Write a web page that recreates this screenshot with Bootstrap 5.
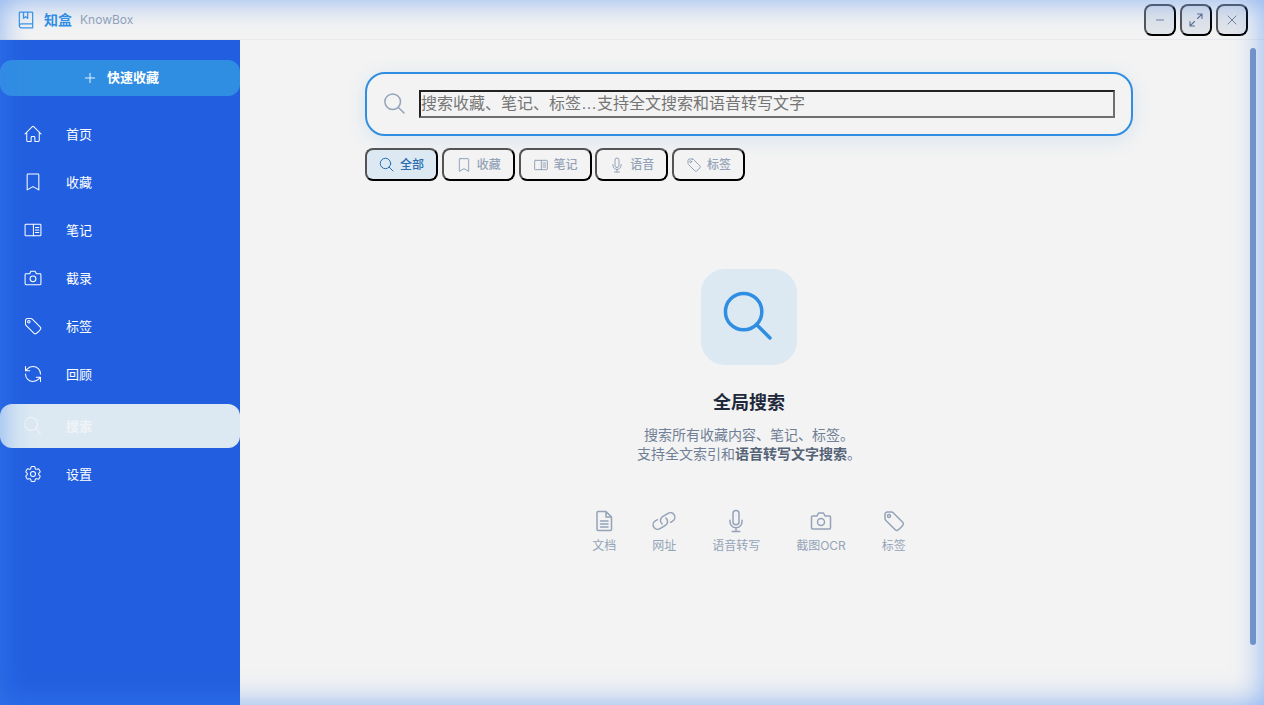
<!DOCTYPE html>
<html lang="zh-CN">
<head>
  <meta charset="UTF-8" />
  <title>知盒 KnowBox</title>
  <link href="https://cdn.jsdelivr.net/npm/bootstrap@5.3.3/dist/css/bootstrap.min.css" rel="stylesheet" />
  <style>
    html, body { height: 100%; overflow: hidden; }
    body { font-family: Inter, "Noto Sans CJK SC", sans-serif; background: #f3f3f3; color: #1a2233; }
    svg.ic { fill: none; stroke: currentColor; stroke-width: 1.5; stroke-linecap: round; stroke-linejoin: round; flex-shrink: 0; overflow: visible; }

    .titlebar { height: 40px; padding: 0 16px; border-bottom: 1px solid #e8e9ec; }
    .logo { color: #3b95e6; margin-right: 8px; }
    .brand { font-size: 14px; font-weight: 600; color: #2f8fe5; margin-right: 8px; }
    .brand-en { font-size: 12px; color: #94a3b8; }
    .win-btn { width: 32px; height: 32px; padding: 0; border: 2px outset #000; border-radius: 8px; background: #e2e5ea; color: #5f7190; }

    .sidebar { width: 240px; background: #225fe0; padding-top: 20px; }
    .quick-btn { height: 36px; padding-left: 2px; gap: 10px; border-radius: 12px; background: #308ee2; font-size: 13px; font-weight: 600; }
    .nav-col { margin-top: 14px; }
    .nav-item { height: 48px; padding-left: 23px; gap: 23px; font-size: 13px; color: #fff; }
    .nav-item svg.ic { stroke-width: 1.25; }
    .nav-item span { padding-top: 2px; }
    .nav-item.active { height: 44px; margin: 6px 0 2px; border-radius: 12px; background: #dce9f3; color: #f1f4f7; font-weight: 600; }

    .main { background: #f3f3f3; padding-top: 32px; padding-right: 6px; }
    .search-wrap { width: 768px; }
    .search-box { height: 64px; padding: 0 16px; gap: 12px; border: 2px solid #308ee2; border-radius: 20px; box-shadow: 0 4px 20px rgba(48, 142, 226, .14); }
    .search-box svg { color: #94a3b8; }
    .search-box input { height: 28px; border: 2px solid; border-color: #222 #6e6e6e #6e6e6e #222; background: transparent; font-family: "Liberation Sans", "Noto Sans CJK SC", sans-serif; font-size: 16px; padding: 0; color: #1a2233; outline: none; }
    .search-box input::placeholder { color: #757575; }

    .filters { gap: 3.75px; margin-top: 12px; }
    .filter-btn { height: 33px; padding: 0 12px; gap: 5px; border: 2px outset #000; border-radius: 8px; background: #f3f3f3; color: #94a3b8; font-size: 12px; font-weight: 500; }
    .filter-btn.active { background: #dce9f3; color: #2a6cb0; }

    .tile { width: 96px; height: 96px; margin-top: 88px; border-radius: 24px; background: #dce9f3; color: #308ee2; }
    .empty-title { font-size: 18px; font-weight: 600; margin: 26px 0 10px; line-height: 24px; color: #1e293b; }
    .empty-desc { font-size: 14px; line-height: 19px; color: #718096; }
    .empty-desc strong { font-weight: 600; color: #556377; }
    .kinds { gap: 36px; margin-top: 46px; color: #94a3b8; font-size: 12px; }
    .kinds div { gap: 4px; }

    .scroll-thumb { position: absolute; top: 48px; left: 1250px; width: 6px; height: 597px; border-radius: 3px; background: #7b96c4; }
    .glow { position: absolute; inset: 0; pointer-events: none; box-shadow: inset 0 0 30px rgba(60, 130, 240, .6); }
  </style>
</head>
<body>
  <svg class="d-none">
    <symbol id="i-book" viewBox="0 0 24 24"><path d="M5 2.500h14a1 1 0 0 1 1 1v18H6.500A2.500 2.500 0 0 1 4 19V3.500a1 1 0 0 1 1-1zM4 19a2.500 2.500 0 0 1 2.500-2.500H20M9 2.500V10l2.500-2 2.500 2V2.500" /></symbol>
    <symbol id="i-home" viewBox="0 0 24 24"><path d="m2.250 12 8.954-8.955c.44-.439 1.152-.439 1.591 0L21.750 12M4.500 9.750v10.125c0 .621.504 1.125 1.125 1.125H9.750v-4.875c0-.621.504-1.125 1.125-1.125h2.250c.621 0 1.125.504 1.125 1.125V21h4.125c.621 0 1.125-.504 1.125-1.125V9.750" /></symbol>
    <symbol id="i-bookmark" viewBox="0 0 24 24"><path d="M6 2.500h12a1 1 0 0 1 1 1v18l-7-4-7 4v-18a1 1 0 0 1 1-1z" /></symbol>
    <symbol id="i-note" viewBox="0 0 24 24"><rect x="2.500" y="5" width="19" height="14" rx="1" /><path d="M12.500 5v14M15 9h4M15 12h4M15 15h4" /></symbol>
    <symbol id="i-camera" viewBox="0 0 24 24"><path d="M3.500 7H8l1.500-3h5L16 7h4.500a1 1 0 0 1 1 1v11a1 1 0 0 1-1 1h-17a1 1 0 0 1-1-1V8a1 1 0 0 1 1-1z" /><circle cx="12" cy="13" r="3.500" /></symbol>
    <symbol id="i-tag" viewBox="0 0 24 24"><path d="M9.568 3H5.250A2.250 2.250 0 0 0 3 5.250v4.318c0 .597.237 1.170.659 1.591l9.581 9.581c.699.699 1.780.872 2.607.33a18.095 18.095 0 0 0 5.223-5.223c.542-.827.369-1.908-.33-2.607L11.160 3.660A2.250 2.250 0 0 0 9.568 3Z" /><circle cx="7" cy="7" r="1.500" /></symbol>
    <symbol id="i-refresh" viewBox="0 0 24 24"><path d="M21 12a9 9 0 0 0-9-9 9.750 9.750 0 0 0-6.740 2.740L3 8M3 3v5h5M3 12a9 9 0 0 0 9 9 9.750 9.750 0 0 0 6.740-2.740L21 16M16 16h5v5" /></symbol>
    <symbol id="i-search" viewBox="0 0 24 24"><circle cx="9.700" cy="9.700" r="7.800" /><path d="M15.200 15.200 21 21" /></symbol>
    <symbol id="i-gear" viewBox="0 0 24 24"><path d="M9.594 3.940c.09-.542.56-.94 1.110-.94h2.593c.55 0 1.020.398 1.110.94l.213 1.281c.063.374.313.686.645.87.074.04.147.083.22.127.325.196.72.257 1.075.124l1.217-.456a1.125 1.125 0 0 1 1.370.49l1.296 2.247a1.125 1.125 0 0 1-.26 1.431l-1.003.827c-.293.241-.438.613-.43.992a7.723 7.723 0 0 1 0 .255c-.008.378.137.75.43.991l1.004.827c.424.35.534.955.26 1.430l-1.298 2.247a1.125 1.125 0 0 1-1.369.491l-1.217-.456c-.355-.133-.75-.072-1.076.124a6.470 6.470 0 0 1-.22.128c-.331.183-.581.495-.644.869l-.213 1.281c-.09.543-.56.94-1.110.94h-2.594c-.55 0-1.019-.398-1.110-.94l-.213-1.281c-.062-.374-.312-.686-.644-.87a6.520 6.520 0 0 1-.22-.127c-.325-.196-.72-.257-1.076-.124l-1.217.456a1.125 1.125 0 0 1-1.369-.49l-1.297-2.247a1.125 1.125 0 0 1 .26-1.431l1.004-.827c.292-.24.437-.613.43-.991a6.932 6.932 0 0 1 0-.255c.007-.38-.138-.751-.43-.992l-1.004-.827a1.125 1.125 0 0 1-.26-1.430l1.297-2.247a1.125 1.125 0 0 1 1.370-.491l1.216.456c.356.133.751.072 1.076-.124.072-.044.146-.086.22-.128.332-.183.582-.495.644-.869l.214-1.280Z" /><circle cx="12" cy="12" r="3" /></symbol>
    <symbol id="i-mic" viewBox="0 0 24 24"><path d="M12 18.750a6 6 0 0 0 6-6v-1.500m-6 7.500a6 6 0 0 1-6-6v-1.500m6 7.500v3.750m-3.750 0h7.500M12 15.750a3 3 0 0 1-3-3V4.500a3 3 0 1 1 6 0v8.250a3 3 0 0 1-3 3Z" /></symbol>
    <symbol id="i-doc" viewBox="0 0 24 24"><path d="M6 2.500h8l5.500 5.500v12.500a1 1 0 0 1-1 1H6a1 1 0 0 1-1-1v-17a1 1 0 0 1 1-1zM14 2.500V8h5.500M8.500 12h7.500M8.500 15h7.500M8.500 18h7.500" /></symbol>
    <symbol id="i-link" viewBox="0 0 24 24"><g transform="rotate(14 12 12)"><path d="M13.190 8.688a4.500 4.500 0 0 1 1.242 7.244l-4.500 4.500a4.500 4.500 0 0 1-6.364-6.364l1.757-1.757m13.350-.622 1.757-1.757a4.500 4.500 0 0 0-6.364-6.364l-4.500 4.500a4.500 4.500 0 0 0 1.242 7.244" /></g></symbol>
  </svg>

  <div class="d-flex flex-column h-100">
    <header class="titlebar d-flex align-items-center flex-shrink-0">
      <svg class="ic logo" width="20" height="20"><use href="#i-book" /></svg>
      <span class="brand">知盒</span>
      <span class="brand-en">KnowBox</span>
      <div class="d-flex gap-1 ms-auto">
        <button class="win-btn d-flex align-items-center justify-content-center" type="button">
          <svg class="ic" width="14" height="14" viewBox="0 0 24 24"><path d="M6 12h12" /></svg>
        </button>
        <button class="win-btn d-flex align-items-center justify-content-center" type="button">
          <svg class="ic" width="18" height="18" viewBox="0 0 24 24"><path d="M14 4h6v6M20 4l-6 6M4 14v6h6M4 20l6-6" /></svg>
        </button>
        <button class="win-btn d-flex align-items-center justify-content-center" type="button">
          <svg class="ic" width="14" height="14" viewBox="0 0 24 24"><path d="M5 5l14 14M19 5 5 19" /></svg>
        </button>
      </div>
    </header>

    <div class="d-flex flex-grow-1 overflow-hidden">
      <aside class="sidebar flex-shrink-0 text-white">
        <div class="quick-btn d-flex align-items-center justify-content-center">
          <svg class="ic" width="14" height="14" viewBox="0 0 24 24"><path d="M12 4v16M4 12h16" /></svg>
          <span>快速收藏</span>
        </div>
        <nav class="nav-col d-flex flex-column">
          <a class="nav-item d-flex align-items-center text-decoration-none"><svg class="ic" width="20" height="20"><use href="#i-home" /></svg><span>首页</span></a>
          <a class="nav-item d-flex align-items-center text-decoration-none"><svg class="ic" width="20" height="20"><use href="#i-bookmark" /></svg><span>收藏</span></a>
          <a class="nav-item d-flex align-items-center text-decoration-none"><svg class="ic" width="20" height="20"><use href="#i-note" /></svg><span>笔记</span></a>
          <a class="nav-item d-flex align-items-center text-decoration-none"><svg class="ic" width="20" height="20"><use href="#i-camera" /></svg><span>截录</span></a>
          <a class="nav-item d-flex align-items-center text-decoration-none"><svg class="ic" width="20" height="20"><use href="#i-tag" /></svg><span>标签</span></a>
          <a class="nav-item d-flex align-items-center text-decoration-none"><svg class="ic" width="20" height="20"><use href="#i-refresh" /></svg><span>回顾</span></a>
          <a class="nav-item active d-flex align-items-center text-decoration-none"><svg class="ic" width="20" height="20"><use href="#i-search" /></svg><span>搜索</span></a>
          <a class="nav-item d-flex align-items-center text-decoration-none"><svg class="ic" width="20" height="20"><use href="#i-gear" /></svg><span>设置</span></a>
        </nav>
      </aside>

      <main class="main flex-grow-1 d-flex flex-column align-items-center">
        <div class="search-wrap">
          <div class="search-box d-flex align-items-center">
            <svg class="ic" width="24" height="24"><use href="#i-search" /></svg>
            <input class="flex-grow-1" type="text" placeholder="搜索收藏、笔记、标签…支持全文搜索和语音转写文字" autofocus />
          </div>
          <div class="filters d-flex">
            <button class="filter-btn active d-flex align-items-center" type="button"><svg class="ic" width="16" height="16"><use href="#i-search" /></svg>全部</button>
            <button class="filter-btn d-flex align-items-center" type="button"><svg class="ic" width="16" height="16"><use href="#i-bookmark" /></svg>收藏</button>
            <button class="filter-btn d-flex align-items-center" type="button"><svg class="ic" width="16" height="16"><use href="#i-note" /></svg>笔记</button>
            <button class="filter-btn d-flex align-items-center" type="button"><svg class="ic" width="16" height="16"><use href="#i-mic" /></svg>语音</button>
            <button class="filter-btn d-flex align-items-center" type="button"><svg class="ic" width="16" height="16"><use href="#i-tag" /></svg>标签</button>
          </div>
        </div>

        <div class="tile d-flex align-items-center justify-content-center">
          <svg class="ic" width="56" height="56"><use href="#i-search" /></svg>
        </div>
        <h2 class="empty-title">全局搜索</h2>
        <p class="empty-desc text-center mb-0">搜索所有收藏内容、笔记、标签。<br />支持全文索引和<strong>语音转写文字搜索</strong>。</p>

        <div class="kinds d-flex">
          <div class="d-flex flex-column align-items-center"><svg class="ic" width="24" height="24"><use href="#i-doc" /></svg><span>文档</span></div>
          <div class="d-flex flex-column align-items-center"><svg class="ic" width="24" height="24"><use href="#i-link" /></svg><span>网址</span></div>
          <div class="d-flex flex-column align-items-center"><svg class="ic" width="24" height="24"><use href="#i-mic" /></svg><span>语音转写</span></div>
          <div class="d-flex flex-column align-items-center"><svg class="ic" width="24" height="24"><use href="#i-camera" /></svg><span>截图OCR</span></div>
          <div class="d-flex flex-column align-items-center"><svg class="ic" width="24" height="24"><use href="#i-tag" /></svg><span>标签</span></div>
        </div>
      </main>
    </div>
  </div>

  <div class="scroll-thumb"></div>
  <div class="glow"></div>

  <script src="https://cdn.jsdelivr.net/npm/bootstrap@5.3.3/dist/js/bootstrap.bundle.min.js"></script>
</body>
</html>
